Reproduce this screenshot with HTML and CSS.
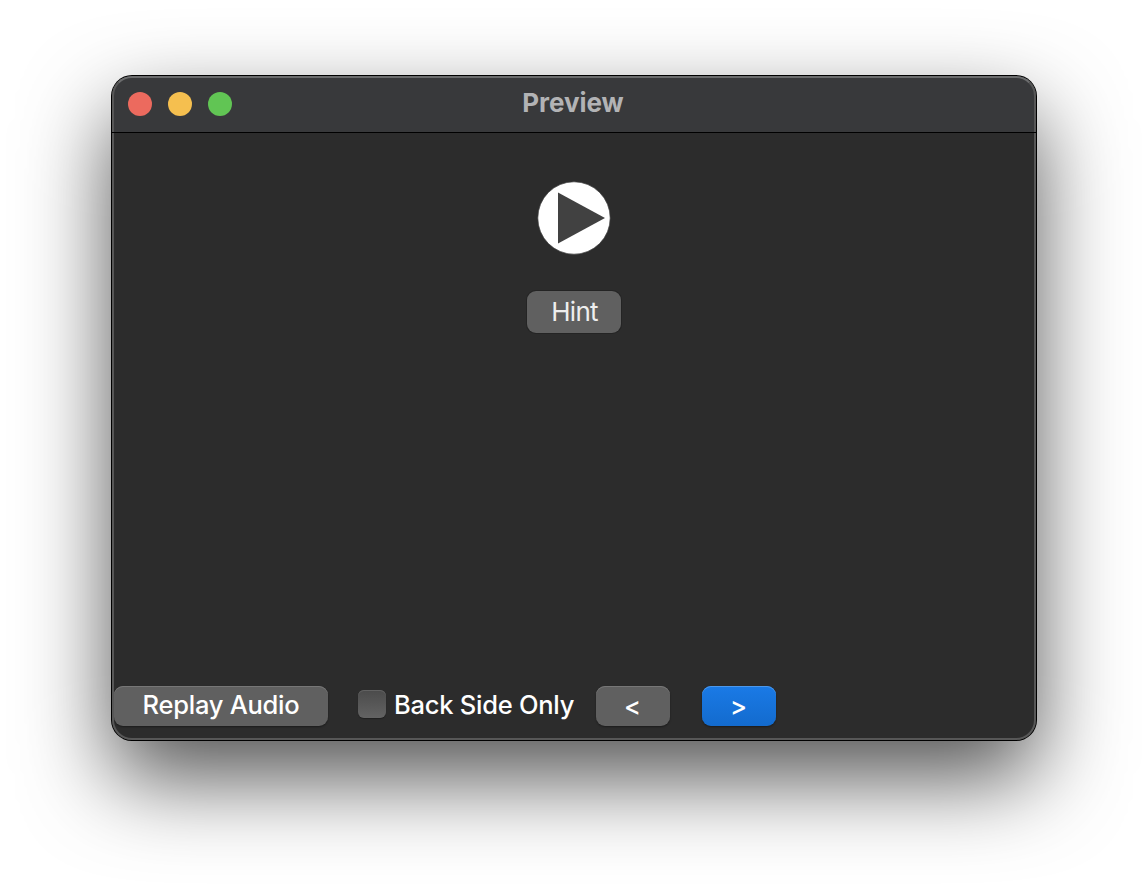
FILE: index.html
```html
<!DOCTYPE html>
<html lang="en">
<head>
<meta charset="utf-8">
<title>Preview</title>
<link rel="stylesheet" href="styles.css">
</head>
<body>
<main class="window">
  <header class="titlebar">
    <div class="lights"><span class="light close"></span><span class="light minimize"></span><span class="light expand"></span></div>
    <h1 class="title">Preview</h1>
  </header>
  <section class="card">
    <svg class="play" viewBox="0 0 74 74" width="74" height="74" role="img" aria-label="Play">
      <circle cx="37" cy="37" r="36.2" fill="#fff" stroke="#414141" stroke-width=".7"/>
      <path d="M21 11.5 L68 37 L21 62.5 Z" fill="#414141"/>
    </svg>
    <button class="button hint"><span class="hint-label">Hint</span></button>
  </section>
  <footer class="toolbar">
    <button class="button replay"><span class="replay-label">Replay Audio</span></button>
    <label class="option"><input class="checkbox" type="checkbox"><span class="option-label">Back Side Only</span></label>
    <button class="button nav previous"><span>&lt;</span></button>
    <button class="button nav next"><span>&gt;</span></button>
  </footer>
</main>
</body>
</html>
```
FILE: styles.css
```css
* { box-sizing: border-box; }
body {
  margin: 0;
  height: 888px;
  padding: 76px 112px 0;
  overflow: hidden;
  background: #fff;
  color: #fff;
  font-family: Inter, "Liberation Sans", sans-serif;
}
.window {
  position: relative;
  display: flex;
  flex-direction: column;
  width: 924px;
  height: 664px;
  border-radius: 20px;
  background: #2c2c2c;
  box-shadow: 0 0 0 1px #000, 0 38px 88px rgba(0, 0, 0, .68);
}
.window::after {
  content: "";
  position: absolute;
  inset: 0;
  border: 2px solid #575757;
  border-top-color: #6b6c6d;
  border-radius: 20px;
  pointer-events: none;
}
.titlebar {
  display: grid;
  grid-template-columns: 1fr auto 1fr;
  align-items: center;
  height: 57px;
  padding: 0 16px;
  border-radius: 20px 20px 0 0;
  background: #38393b;
}
.titlebar::after {
  content: "";
  position: absolute;
  z-index: 1;
  top: 56px;
  left: 0;
  right: 0;
  height: 1px;
  background: #000;
}
.lights { display: flex; gap: 16px; padding-bottom: 1px; }
.light { width: 24px; height: 24px; border-radius: 50%; }
.close { background: #ec6a5e; }
.minimize { background: #f5bf4f; }
.expand { background: #61c554; }
.title {
  margin: 0 2px 3px 0;
  color: #b2b3b5;
  font-size: 26px;
  line-height: 32px;
  font-weight: 700;
  letter-spacing: -.05px;
}
.card {
  display: flex;
  flex: 1;
  flex-direction: column;
  align-items: center;
  padding-top: 48px;
}
.button {
  display: flex;
  align-items: center;
  justify-content: center;
  border: 0;
  padding: 0 0 2px;
  border-radius: 9px;
  background: #606060;
  color: #fff;
  font: 500 25.5px/30px Inter, "Liberation Sans", sans-serif;
  letter-spacing: -.26px;
  box-shadow: inset 0 1px #777, 0 1px 2px rgba(0, 0, 0, .4);
}
.hint {
  width: 94px;
  height: 42px;
  margin-top: 36px;
  padding: 0 0 0 1px;
  color: #eee;
  font-size: 26px;
  font-weight: 400;
  letter-spacing: -.7px;
  box-shadow: 0 0 0 1px #242424;
}
.toolbar {
  display: flex;
  align-items: center;
  height: 54px;
  padding: 0 2px 14px;
}
.replay { width: 214px; height: 40px; }
.option {
  display: flex;
  align-items: center;
  width: 238px;
  margin-left: 30px;
}
.checkbox {
  appearance: none;
  flex: none;
  width: 28px;
  height: 28px;
  margin: -4px 8px 0 0;
  border-radius: 6px;
  background: linear-gradient(#4b4b4b, #636363);
  box-shadow: inset 0 1px #626262, 0 1px 1px rgba(0, 0, 0, .3);
}
.option-label {
  white-space: nowrap;
  font-weight: 500;
  font-size: 25.5px;
  line-height: 30px;
  letter-spacing: -.25px;
  margin-top: -2px;
}
.nav { width: 74px; height: 40px; padding: 0 1px 1px 0; }
.next {
  margin-left: 32px;
  background: linear-gradient(#1a7ae6, #136bce);
  box-shadow: inset 0 1px #4c98eb, 0 1px 2px rgba(0, 0, 0, .4);
}
```
